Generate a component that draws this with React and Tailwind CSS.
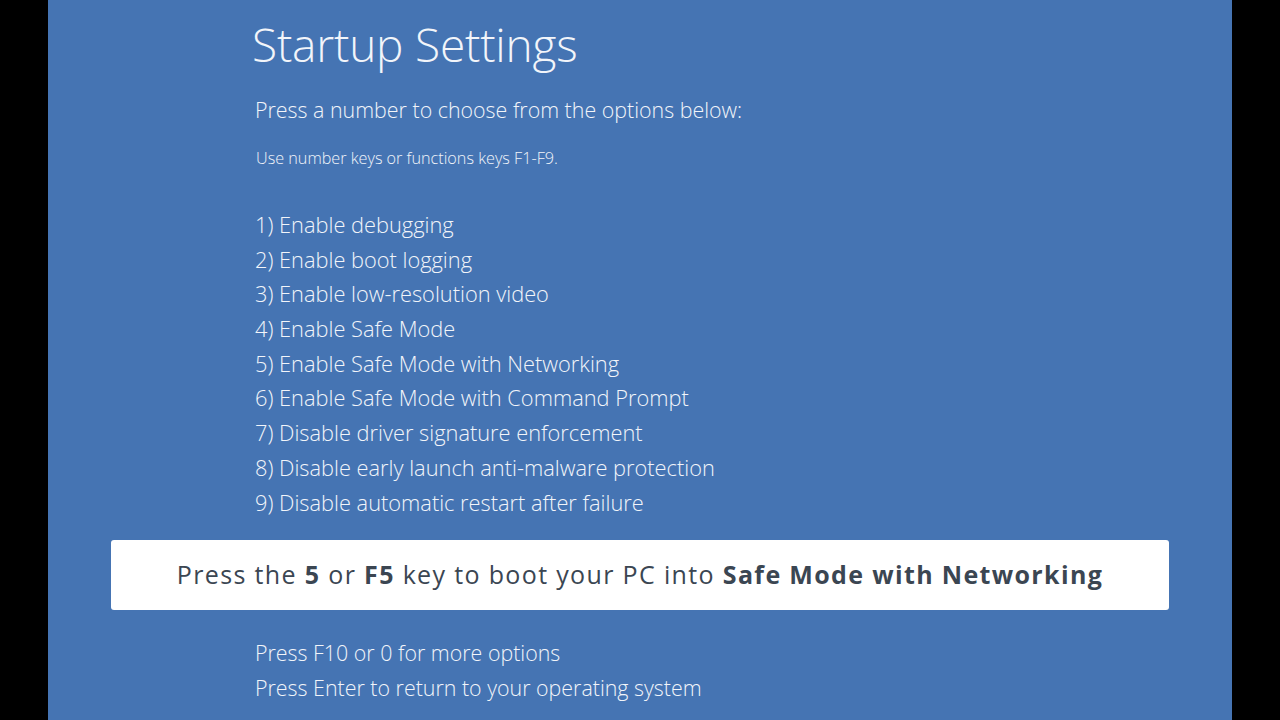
import React from 'react';

const options = [
  '1) Enable debugging',
  '2) Enable boot logging',
  '3) Enable low-resolution video',
  '4) Enable Safe Mode',
  '5) Enable Safe Mode with Networking',
  '6) Enable Safe Mode with Command Prompt',
  '7) Disable driver signature enforcement',
  '8) Disable early launch anti-malware protection',
  '9) Disable automatic restart after failure',
];

export default function App() {
  return (
    <div className="flex h-[720px] w-[1280px] overflow-hidden bg-black">
      <div
        className="mx-[48px] flex flex-1 flex-col bg-[#4574b3] text-[#f2f5fa]"
        style={{ fontFamily: '"Open Sans", "Noto Sans", sans-serif' }}
      >
        {/* Header */}
        <div className="pl-[204px]">
          <h1 className="mt-[15px] h-[58px] text-[46px] font-light leading-[58px] tracking-[-0.2px]">
            Startup Settings
          </h1>
          <p className="mt-[22px] h-[30px] pl-[3px] text-[21.4px] font-light leading-[30px]">
            Press a number to choose from the options below:
          </p>
          <p className="mt-[23px] h-[20px] pl-[4px] text-[16.2px] font-light leading-[20px]">
            Use number keys or functions keys F1-F9.
          </p>
        </div>

        {/* Options */}
        <ul className="mt-[40px] pl-[207px]">
          {options.map((o) => (
            <li key={o} className="h-[34.7px] text-[21.8px] font-light leading-[34.7px]">
              {o}
            </li>
          ))}
        </ul>

        {/* Callout */}
        <div className="mx-[63px] mt-[20px] flex h-[70px] items-center justify-center rounded-[3px] bg-white">
          <p
            className="text-[25px] tracking-[1.35px] text-[#3b4652]"
            style={{ fontFamily: '"Open Sans", Lato, sans-serif' }}
          >
            Press the <b className="font-bold">5</b> or <b className="font-bold">F5</b> key to boot your PC into{' '}
            <b className="font-bold">Safe Mode with Networking</b>
          </p>
        </div>

        {/* Footer */}
        <div className="mt-[26px] pl-[207px] text-[21.4px] font-light">
          <p className="h-[34.7px] leading-[34.7px]">Press F10 or 0 for more options</p>
          <p className="h-[34.7px] leading-[34.7px]">Press Enter to return to your operating system</p>
        </div>
      </div>
    </div>
  );
}
